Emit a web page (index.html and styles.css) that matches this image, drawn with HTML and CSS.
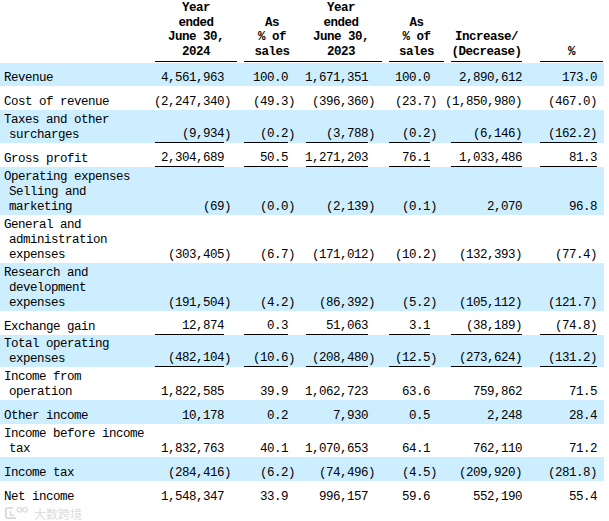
FILE: index.html
```html
<!DOCTYPE html>
<html lang="en">
<head>
<meta charset="utf-8">
<title>Results of operations</title>
<link rel="stylesheet" href="styles.css">
</head>
<body>
<div class="table">
  <div class="row head">
    <div class="hc h0"></div>
    <div class="hc h1">Year<br>ended<br>June 30,<br>2024</div>
    <div class="hc h2">As<br>% of<br>sales</div>
    <div class="hc h3">Year<br>ended<br>June 30,<br>2023</div>
    <div class="hc h4">As<br>% of<br>sales</div>
    <div class="hc h5">Increase/<br>(Decrease)</div>
    <div class="hc h6">%</div>
  </div>

  <div class="row blue short">
    <div class="lbl">Revenue</div>
    <div class="n v1">4,561,963</div>
    <div class="n v2">100.0</div>
    <div class="n v3">1,671,351</div>
    <div class="n v4">100.0</div>
    <div class="n v5">2,890,612</div>
    <div class="n v6">173.0</div>
  </div>

  <div class="row">
    <div class="lbl">Cost of revenue</div>
    <div class="n v1">(2,247,340</div><div class="p p1">)</div>
    <div class="n v2">(49.3</div><div class="p p2">)</div>
    <div class="n v3">(396,360</div><div class="p p3">)</div>
    <div class="n v4">(23.7</div><div class="p p4">)</div>
    <div class="n v5">(1,850,980)</div>
    <div class="n v6">(467.0)</div>
  </div>

  <div class="row blue">
    <div class="lbl">Taxes and other surcharges</div>
    <div class="n v1 u">(9,934</div><div class="p p1">)</div>
    <div class="n v2 u">(0.2</div><div class="p p2">)</div>
    <div class="n v3 u">(3,788</div><div class="p p3">)</div>
    <div class="n v4 u">(0.2</div><div class="p p4">)</div>
    <div class="n v5 u">(6,146)</div>
    <div class="n v6 u">(162.2)</div>
  </div>

  <div class="row">
    <div class="lbl">Gross profit</div>
    <div class="n v1 u">2,304,689</div>
    <div class="n v2 u">50.5</div>
    <div class="n v3 u">1,271,203</div>
    <div class="n v4 u">76.1</div>
    <div class="n v5 u">1,033,486</div>
    <div class="n v6 u">81.3</div>
  </div>

  <div class="row blue">
    <div class="lbl">Operating expenses<br>Selling and marketing</div>
    <div class="n v1">(69</div><div class="p p1">)</div>
    <div class="n v2">(0.0</div><div class="p p2">)</div>
    <div class="n v3">(2,139</div><div class="p p3">)</div>
    <div class="n v4">(0.1</div><div class="p p4">)</div>
    <div class="n v5">2,070</div>
    <div class="n v6">96.8</div>
  </div>

  <div class="row">
    <div class="lbl">General and administration expenses</div>
    <div class="n v1">(303,405</div><div class="p p1">)</div>
    <div class="n v2">(6.7</div><div class="p p2">)</div>
    <div class="n v3">(171,012</div><div class="p p3">)</div>
    <div class="n v4">(10.2</div><div class="p p4">)</div>
    <div class="n v5">(132,393)</div>
    <div class="n v6">(77.4)</div>
  </div>

  <div class="row blue">
    <div class="lbl">Research and development expenses</div>
    <div class="n v1">(191,504</div><div class="p p1">)</div>
    <div class="n v2">(4.2</div><div class="p p2">)</div>
    <div class="n v3">(86,392</div><div class="p p3">)</div>
    <div class="n v4">(5.2</div><div class="p p4">)</div>
    <div class="n v5">(105,112)</div>
    <div class="n v6">(121.7)</div>
  </div>

  <div class="row">
    <div class="lbl">Exchange gain</div>
    <div class="n v1 u">12,874</div>
    <div class="n v2 u">0.3</div>
    <div class="n v3 u">51,063</div>
    <div class="n v4 u">3.1</div>
    <div class="n v5 u">(38,189)</div>
    <div class="n v6 u">(74.8)</div>
  </div>

  <div class="row blue tight">
    <div class="lbl">Total operating expenses</div>
    <div class="n v1 u">(482,104</div><div class="p p1">)</div>
    <div class="n v2 u">(10.6</div><div class="p p2">)</div>
    <div class="n v3 u">(208,480</div><div class="p p3">)</div>
    <div class="n v4 u">(12.5</div><div class="p p4">)</div>
    <div class="n v5 u">(273,624)</div>
    <div class="n v6 u">(131.2)</div>
  </div>

  <div class="row">
    <div class="lbl">Income from operation</div>
    <div class="n v1">1,822,585</div>
    <div class="n v2">39.9</div>
    <div class="n v3">1,062,723</div>
    <div class="n v4">63.6</div>
    <div class="n v5">759,862</div>
    <div class="n v6">71.5</div>
  </div>

  <div class="row blue">
    <div class="lbl">Other income</div>
    <div class="n v1">10,178</div>
    <div class="n v2">0.2</div>
    <div class="n v3">7,930</div>
    <div class="n v4">0.5</div>
    <div class="n v5">2,248</div>
    <div class="n v6">28.4</div>
  </div>

  <div class="row">
    <div class="lbl">Income before income tax</div>
    <div class="n v1">1,832,763</div>
    <div class="n v2">40.1</div>
    <div class="n v3">1,070,653</div>
    <div class="n v4">64.1</div>
    <div class="n v5">762,110</div>
    <div class="n v6">71.2</div>
  </div>

  <div class="row blue">
    <div class="lbl">Income tax</div>
    <div class="n v1">(284,416</div><div class="p p1">)</div>
    <div class="n v2">(6.2</div><div class="p p2">)</div>
    <div class="n v3">(74,496</div><div class="p p3">)</div>
    <div class="n v4">(4.5</div><div class="p p4">)</div>
    <div class="n v5">(209,920)</div>
    <div class="n v6">(281.8)</div>
  </div>

  <div class="row">
    <div class="lbl">Net income</div>
    <div class="n v1">1,548,347</div>
    <div class="n v2">33.9</div>
    <div class="n v3">996,157</div>
    <div class="n v4">59.6</div>
    <div class="n v5">552,190</div>
    <div class="n v6">55.4</div>
  </div>
</div>

<div class="watermark">
  <svg class="wm-logo" width="27" height="14" viewBox="0 0 27 15">
    <path d="M9 2 H3 Q1 2 1 4 V11 Q1 13 3 13 H12" fill="none" stroke="#d9d9d9" stroke-width="2"/>
    <path d="M6 5 V10 H10" fill="none" stroke="#d9d9d9" stroke-width="1.5"/>
    <circle cx="15.5" cy="4" r="2.4" fill="none" stroke="#d9d9d9" stroke-width="1.2"/>
    <circle cx="21.5" cy="4" r="2.4" fill="none" stroke="#d9d9d9" stroke-width="1.2"/>
  </svg>
  <span class="wm-text">大数跨境</span>
</div>
</body>
</html>
```

FILE: styles.css
```css
html, body {
  margin: 0;
  padding: 0;
  background: #ffffff;
}

body {
  position: relative;
  width: 609px;
  height: 521px;
  overflow: hidden;
  font-family: "Liberation Mono", "DejaVu Sans Mono", monospace;
  font-size: 12.5px;
  letter-spacing: -0.5px;
  line-height: 15px;
  color: #000;
}

.table {
  width: 604px;
}

.row {
  display: grid;
  grid-template-columns: 155px 69px 13px 7px 44px 12px 6px 62px 14px 7px 41px 14px 7px 71px 18px 57px 7px;
  min-height: 24px;
}

.row.short {
  min-height: 23px;
}

.row.blue {
  background: #cceeff;
}

.row.head {
  height: 62px;
  margin-bottom: 1px;
  line-height: 14.5px;
  font-weight: bold;
}

.hc {
  display: flex;
  flex-direction: column;
  justify-content: flex-end;
  align-items: center;
  text-align: center;
  padding-bottom: 2px;
  white-space: nowrap;
}

.h0 { grid-column: 1; }
.h1 { grid-column: 2 / 4; border-bottom: 1px solid #000; }
.h2 { grid-column: 5 / 7; border-bottom: 1px solid #000; }
.h3 { grid-column: 7 / 10; border-bottom: 1px solid #000; }
.h4 { grid-column: 11 / 13; border-bottom: 1px solid #000; }
.h5 { grid-column: 14 / 15; border-bottom: 1px solid #000; }
.h6 { grid-column: 16 / 18; border-bottom: 1px solid #000; margin-right: 1px; }

.lbl {
  grid-column: 1;
  align-self: end;
  padding: 2.5px 8px 0.5px 9px;
  text-indent: -5px;
}

.row.tight .lbl {
  padding-top: 1.5px;
}

.n {
  display: flex;
  justify-content: flex-end;
  align-items: flex-end;
  padding-bottom: 0.5px;
  white-space: nowrap;
}

.n.u {
  border-bottom: 1px solid #000;
  padding-bottom: 0;
  margin-bottom: 0.5px;
}

.p {
  align-self: end;
  padding-bottom: 0.5px;
  white-space: nowrap;
}

.v1 { grid-column: 2; }
.p1 { grid-column: 3; }
.v2 { grid-column: 5; }
.p2 { grid-column: 6; }
.v3 { grid-column: 8; }
.p3 { grid-column: 9; }
.v4 { grid-column: 11; }
.p4 { grid-column: 12; }
.v5 { grid-column: 14; }
.v6 { grid-column: 16; }

.watermark {
  position: absolute;
  left: 4px;
  top: 506px;
  display: flex;
  align-items: center;
  gap: 3px;
}

.wm-text {
  font-family: "Noto Sans CJK SC", sans-serif;
  font-size: 12px;
  letter-spacing: 0;
  color: #dcdcdc;
  line-height: 13px;
}
```
